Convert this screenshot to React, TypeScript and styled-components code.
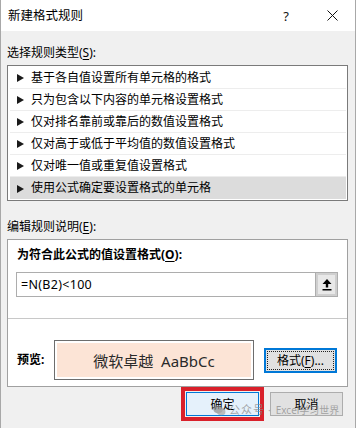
import React from "react";
import styled, { createGlobalStyle } from "styled-components";

const GlobalStyle = createGlobalStyle`
  html, body { margin: 0; padding: 0; background: #f0f0f0; }
  body {
    font-family: "Noto Sans", "Noto Sans CJK SC", sans-serif;
    color: #000;
  }
  * { box-sizing: border-box; }
`;

const FONT = `"Noto Sans", "Noto Sans CJK SC", sans-serif`;

const Dialog = styled.div`
  position: relative;
  width: 356px;
  height: 428px;
  background: #f0f0f0;
  border-left: 1px solid #a8a8a8;
  border-right: 1px solid #a8a8a8;
  display: flex;
  flex-direction: column;
  overflow: hidden;
  font-family: ${FONT};
`;

const TitleBar = styled.div`
  height: 31px;
  flex: 0 0 31px;
  background: #fff;
  display: flex;
  align-items: center;
  padding-left: 7px;
`;

const Title = styled.div`
  flex: 1;
  font-size: 12.5px;
  line-height: 16px;
  color: #000;
`;

const TitleButton = styled.div`
  width: 46px;
  height: 31px;
  display: flex;
  align-items: center;
  justify-content: center;
  font-size: 13px;
  color: #111;
`;

const Body = styled.div`
  padding: 0 7px 0 6px;
  display: flex;
  flex-direction: column;
`;

const SectionLabel = styled.div<{ $top: number }>`
  margin-top: ${(p) => p.$top}px;
  margin-bottom: 4px;
  font-size: 12px;
  line-height: 16px;
  height: 16px;
  color: #000;
  u { text-decoration: underline; text-underline-offset: 2px; }
`;

const RuleList = styled.div`
  height: 136px;
  background: #fff;
  border: 1px solid #7a7a7a;
  padding: 1px 1px 1px 2px;
  display: flex;
  flex-direction: column;
`;

const RuleRow = styled.div<{ $selected?: boolean }>`
  height: 22px;
  flex: 0 0 22px;
  display: flex;
  align-items: center;
  padding-left: 7px;
  gap: 7px;
  font-size: 12px;
  line-height: 16px;
  background: ${(p) => (p.$selected ? "#dcdcdc" : "#fff")};
  border-bottom: ${(p) => (p.$selected ? "none" : "1px solid #ededed")};
`;

const Arrow = styled.span`
  width: 0;
  height: 0;
  border-top: 4px solid transparent;
  border-bottom: 4px solid transparent;
  border-left: 7px solid #1a1a1a;
  margin-top: 1px;
`;

const DescPanel = styled.div`
  height: 148px;
  background: #fff;
  border: 1px solid #a0a0a0;
  display: flex;
  flex-direction: column;
`;

const FormulaSection = styled.div`
  padding: 7px 9px 0 8px;
`;

const BoldLabel = styled.div`
  margin-left: 1px;
  font-size: 12px;
  font-weight: 700;
  line-height: 16px;
  height: 16px;
  u { text-decoration: underline; text-underline-offset: 2px; }
`;

const FormulaInput = styled.div`
  margin-top: 9px;
  height: 25px;
  border: 1px solid #adadad;
  display: flex;
  align-items: stretch;
`;

const FormulaText = styled.div`
  flex: 1;
  display: flex;
  align-items: center;
  padding-left: 4px;
  font-size: 12.5px;
  letter-spacing: 0.3px;
  color: #000;
`;

const CollapseButton = styled.div`
  width: 22px;
  background: #e8e8e8;
  border-left: 1px solid #adadad;
  box-shadow: inset 0 0 0 2px #cfcfcf;
  display: flex;
  align-items: center;
  justify-content: center;
`;

const Divider = styled.div`
  margin-top: 21px;
  height: 1px;
  background: #c8c8c8;
`;

const PreviewRow = styled.div`
  padding: 21px 0 6px 9px;
  display: flex;
  align-items: center;
`;

const PreviewLabel = styled.div`
  width: 37px;
  font-size: 12px;
  font-weight: 700;
  line-height: 16px;
`;

const PreviewBox = styled.div`
  width: 200px;
  height: 40px;
  border: 1px solid #6d6d6d;
  padding: 2px;
  background: #fff;
`;

const PreviewFill = styled.div`
  height: 100%;
  background: #fce4d6;
  display: flex;
  align-items: center;
  justify-content: center;
  font-size: 15px;
  color: #2a2a2a;
  white-space: pre;
`;

const FormatButton = styled.div`
  margin-left: 10px;
  width: 73px;
  height: 25px;
  background: #e1e1e1;
  border: 2px solid #0078d7;
  outline: 1px dotted #222;
  outline-offset: -4px;
  display: flex;
  align-items: center;
  justify-content: center;
  font-size: 12px;
  u { text-decoration: underline; text-underline-offset: 2px; }
`;

const Footer = styled.div`
  display: flex;
  justify-content: flex-end;
  align-items: center;
  gap: 6px;
  padding-right: 12px;
  height: 34px;
`;

const Highlight = styled.div`
  border: 4px solid #d9202a;
  padding: 1px;
  background: #f0f0f0;
`;

const Button = styled.div<{ $primary?: boolean }>`
  width: 73px;
  height: 24px;
  display: flex;
  align-items: center;
  justify-content: center;
  font-size: 12px;
  background: ${(p) => (p.$primary ? "#e5f1fb" : "#e1e1e1")};
  border: 1px solid ${(p) => (p.$primary ? "#0078d7" : "#adadad")};
`;

const Watermark = styled.div`
  position: absolute;
  left: 212px;
  top: 403px;
  display: flex;
  align-items: center;
  color: rgba(140, 140, 140, 0.75);
  white-space: pre;
  pointer-events: none;
`;

const WatermarkPart = styled.span<{ $size: number; $spacing: number; $left: number }>`
  margin-left: ${(p) => p.$left}px;
  font-size: ${(p) => p.$size}px;
  letter-spacing: ${(p) => p.$spacing}px;
  line-height: 14px;
`;

const rules = [
  "基于各自值设置所有单元格的格式",
  "只为包含以下内容的单元格设置格式",
  "仅对排名靠前或靠后的数值设置格式",
  "仅对高于或低于平均值的数值设置格式",
  "仅对唯一值或重复值设置格式",
  "使用公式确定要设置格式的单元格",
];

export default function App() {
  return (
    <>
      <GlobalStyle />
      <Dialog>
        <TitleBar>
          <Title>新建格式规则</Title>
          <TitleButton>?</TitleButton>
          <TitleButton>
            <svg width="11" height="11" viewBox="0 0 11 11">
              <path d="M0.5 0.5 L10.5 10.5 M10.5 0.5 L0.5 10.5" stroke="#111" strokeWidth="1" fill="none" />
            </svg>
          </TitleButton>
        </TitleBar>
        <Body>
          <SectionLabel $top={14}>
            选择规则类型(<u>S</u>):
          </SectionLabel>
          <RuleList>
            {rules.map((r, i) => (
              <RuleRow key={r} $selected={i === rules.length - 1}>
                <Arrow />
                <span>{r}</span>
              </RuleRow>
            ))}
          </RuleList>
          <SectionLabel $top={18}>
            编辑规则说明(<u>E</u>):
          </SectionLabel>
          <DescPanel>
            <FormulaSection>
              <BoldLabel>
                为符合此公式的值设置格式(<u>O</u>):
              </BoldLabel>
              <FormulaInput>
                <FormulaText>=N(B2)&lt;100</FormulaText>
                <CollapseButton>
                  <svg width="10" height="12" viewBox="0 0 10 12">
                    <polygon points="5,0 9.5,5 6.2,5 6.2,8.5 3.8,8.5 3.8,5 0.5,5" fill="#000" />
                    <rect x="0.5" y="10" width="9" height="1.5" fill="#000" />
                  </svg>
                </CollapseButton>
              </FormulaInput>
            </FormulaSection>
            <Divider />
            <PreviewRow>
              <PreviewLabel>预览:</PreviewLabel>
              <PreviewBox>
                <PreviewFill>{"微软卓越  AaBbCc"}</PreviewFill>
              </PreviewBox>
              <FormatButton>
                格式(<u>F</u>)...
              </FormatButton>
            </PreviewRow>
          </DescPanel>
        </Body>
        <Footer>
          <Highlight>
            <Button $primary>确定</Button>
          </Highlight>
          <Button>取消</Button>
        </Footer>
        <Watermark>
          <svg width="13" height="11" viewBox="0 0 14 12">
            <ellipse cx="5.5" cy="5" rx="5.2" ry="4.3" fill="rgba(140,140,140,0.7)" />
            <ellipse cx="9" cy="7.5" rx="4.5" ry="3.6" fill="rgba(170,170,170,0.75)" />
          </svg>
          <WatermarkPart $size={11} $spacing={1} $left={3}>公众号</WatermarkPart>
          <WatermarkPart $size={10} $spacing={0} $left={3}>·</WatermarkPart>
          <WatermarkPart $size={10} $spacing={0} $left={5}>Excel学习世界</WatermarkPart>
        </Watermark>
      </Dialog>
    </>
  );
}
